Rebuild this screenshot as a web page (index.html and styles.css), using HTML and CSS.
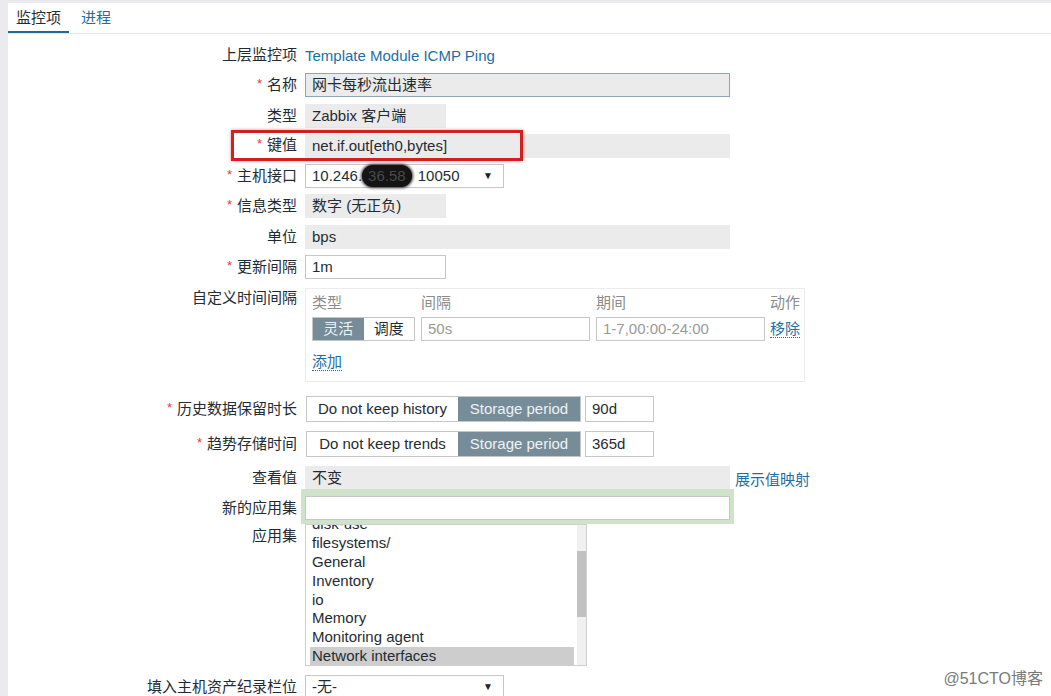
FILE: index.html
```html
<!DOCTYPE html>
<html lang="zh-CN">
<head>
    <meta charset="UTF-8">
    <title>监控项</title>
    <link rel="stylesheet" href="styles.css">
</head>
<body>
    <div class="panel">
        <div class="tabs">
            <span class="tab active">监控项</span>
            <span class="tab link">进程</span>
        </div>

        <div class="form">
            <div class="row">
                <div class="label">上层监控项</div>
                <div class="field"><span class="link">Template Module ICMP Ping</span></div>
            </div>
            <div class="row">
                <div class="label"><span class="req">*</span>名称</div>
                <div class="field"><div class="box ro wide name">网卡每秒流出速率</div></div>
            </div>
            <div class="row">
                <div class="label">类型</div>
                <div class="field"><div class="box ro short">Zabbix 客户端</div></div>
            </div>
            <div class="row marked">
                <div class="label"><span class="req">*</span>键值</div>
                <div class="field"><div class="box ro wide">net.if.out[eth0,bytes]</div></div>
                <div class="redmark"></div>
            </div>
            <div class="row">
                <div class="label"><span class="req">*</span>主机接口</div>
                <div class="field">
                    <div class="box select">
                        <span>10.246.<span class="blur">36.58</span> 10050</span>
                        <span class="arrow">▼</span>
                    </div>
                </div>
            </div>
            <div class="row">
                <div class="label"><span class="req">*</span>信息类型</div>
                <div class="field"><div class="box ro short">数字 (无正负)</div></div>
            </div>
            <div class="row">
                <div class="label">单位</div>
                <div class="field"><div class="box ro wide">bps</div></div>
            </div>
            <div class="row gap-l">
                <div class="label"><span class="req">*</span>更新间隔</div>
                <div class="field"><div class="box short">1m</div></div>
            </div>

            <div class="row top gap-xl">
                <div class="label">自定义时间间隔</div>
                <div class="field">
                    <div class="intervals">
                        <div class="igrid head">
                            <span>类型</span><span>间隔</span><span>期间</span><span>动作</span>
                        </div>
                        <div class="igrid body">
                            <div class="seg small">
                                <span class="on">灵活</span><span>调度</span>
                            </div>
                            <div class="box hint">50s</div>
                            <div class="box hint">1-7,00:00-24:00</div>
                            <span><span class="link dotted">移除</span></span>
                        </div>
                        <div class="add"><span class="link dotted">添加</span></div>
                    </div>
                </div>
            </div>

            <div class="row gap-m">
                <div class="label"><span class="req">*</span>历史数据保留时长</div>
                <div class="field storage">
                    <div class="seg">
                        <span class="opt">Do not keep history</span><span class="on sp">Storage period</span>
                    </div>
                    <div class="box days">90d</div>
                </div>
            </div>
            <div class="row gap-m">
                <div class="label"><span class="req">*</span>趋势存储时间</div>
                <div class="field storage">
                    <div class="seg">
                        <span class="opt">Do not keep trends</span><span class="on sp">Storage period</span>
                    </div>
                    <div class="box days">365d</div>
                </div>
            </div>
            <div class="row">
                <div class="label">查看值</div>
                <div class="field">
                    <div class="box ro wide">不变</div>
                    <span class="link maplink">展示值映射</span>
                </div>
            </div>
            <div class="row gap-s">
                <div class="label">新的应用集</div>
                <div class="field"><div class="box wide glow"></div></div>
            </div>
            <div class="row top gap-m">
                <div class="label apps">应用集</div>
                <div class="field">
                    <div class="listbox">
                        <div class="items">
                            <div class="item first">disk-use</div>
                            <div class="item">filesystems/</div>
                            <div class="item">General</div>
                            <div class="item">Inventory</div>
                            <div class="item">io</div>
                            <div class="item">Memory</div>
                            <div class="item">Monitoring agent</div>
                            <div class="item sel">Network interfaces</div>
                        </div>
                        <div class="scroll"><div class="thumb"></div></div>
                    </div>
                </div>
            </div>
            <div class="row">
                <div class="label">填入主机资产纪录栏位</div>
                <div class="field">
                    <div class="box select">
                        <span>-无-</span>
                        <span class="arrow">▼</span>
                    </div>
                </div>
            </div>
        </div>
    </div>

    <div class="watermark">@51CTO博客</div>
</body>
</html>
```

FILE: styles.css
```css
body {margin: 0; height: 696px; overflow: hidden; background: #ebebef; font-family: "Liberation Sans", "Noto Sans CJK SC", sans-serif; font-size: 15px; color: #1f2c33;}
.panel {margin: 3px 0 0 8px; height: 693px; background: #fff;}
.tabs {display: flex; height: 30px; border-bottom: 1px solid #e6e6e6; gap: 4px;}
.tab {padding: 0 8px; line-height: 29px; border-bottom: 2px solid transparent;}
.tab.active {border-bottom-color: #1e6a94;}
.link {color: #1c6fa6;}
.dotted {border-bottom: 1px dotted #1c6fa6; line-height: 18px;}

.form {padding-top: 9px;}
.row {display: flex; align-items: center; gap: 8px; min-height: 24px; margin-bottom: 6.3px; position: relative;}
.row.top {align-items: flex-start;}
.row.gap-s {margin-bottom: 4px;}
.row.gap-m {margin-bottom: 9px;}
.row.gap-l {margin-bottom: 9px;}
.row.gap-xl {margin-bottom: 14px;}
.label {width: 289px; flex: none; text-align: right; line-height: 20px; white-space: nowrap;}
.label.apps {padding-top: 2px;}
.req {color: #e33; font-size: 13px; margin-right: 5px; position: relative; top: -2px;}
.field {display: flex; align-items: center; gap: 5px;}

.box {box-sizing: border-box; height: 24px; line-height: 22px; padding: 0 6px; border: 1px solid #c6c6c6; background: #fff; white-space: nowrap;}
.box.ro {background: #ebebeb; border-color: #ebebeb;}
.box.name {border-color: #8ba5bb;}
.box.wide {width: 425px;}
.box.short {width: 141px;}
.box.select {width: 199px; display: flex; justify-content: space-between; align-items: center;}
.box.hint {color: #9a9a9a; width: 169px;}
.box.days {width: 69px; height: 26px; line-height: 24px;}
.box.glow {box-shadow: 0 0 0 4px #cfe3ca, 0 -3px 0 4px #cfe3ca;}
.arrow {font-size: 10px; color: #222; margin-right: 4px;}
.blur {display: inline-block; background: #141414; color: #4a4a4a; border-radius: 11px; padding: 0 6px; margin-right: 2px; line-height: 22px; box-shadow: 0 0 3px 1px #333;}

.redmark {position: absolute; left: 223px; top: -4px; width: 286px; height: 25px; border: 3px solid #d0201f; box-shadow: 0 0 3px rgba(208, 32, 31, 0.5);}

.intervals {box-sizing: border-box; width: 500px; height: 94px; border: 1px solid #ececec; padding: 5px 0 0 6px;}
.igrid {display: grid; grid-template-columns: 103px 169px 169px auto; column-gap: 6px; align-items: center; white-space: nowrap;}
.igrid.head {color: #8c8c8c; line-height: 17px;}
.igrid.body {margin-top: 6px;}
.igrid > span:last-child {margin-left: -1px;}
.add {margin-top: 12px; line-height: 18px;}

.seg {display: flex; height: 26px; border: 1px solid #c6c6c6; box-sizing: border-box; margin-left: 1px;}
.seg span {display: block; line-height: 24px; text-align: center;}
.seg .on {background: #768d99; color: #eef2f4;}
.seg .opt {width: 151px;}
.seg .sp {width: 122px;}
.seg.small {height: 24px; margin-left: 0;}
.seg.small span {width: 51px; line-height: 22px;}
.storage {gap: 4px;}

.listbox {box-sizing: border-box; width: 282px; height: 142px; border: 1px solid #cfcfcf; display: flex;}
.items {flex: 1; overflow: hidden; margin: 0 3px 0 4px;}
.item {height: 18.8px; line-height: 18.8px; padding-left: 2px; white-space: nowrap;}
.item.first {margin-top: -10px;}
.item.sel {background: #cdcdcd;}
.scroll {width: 9px; background: #f0f0f0; padding-top: 26px;}
.thumb {height: 66px; background: #c1c1c1;}

.watermark {position: absolute; right: 8px; bottom: 7px; color: #7a7a7a; font-size: 16px; text-shadow: 0 0 2px #fff;}
```
